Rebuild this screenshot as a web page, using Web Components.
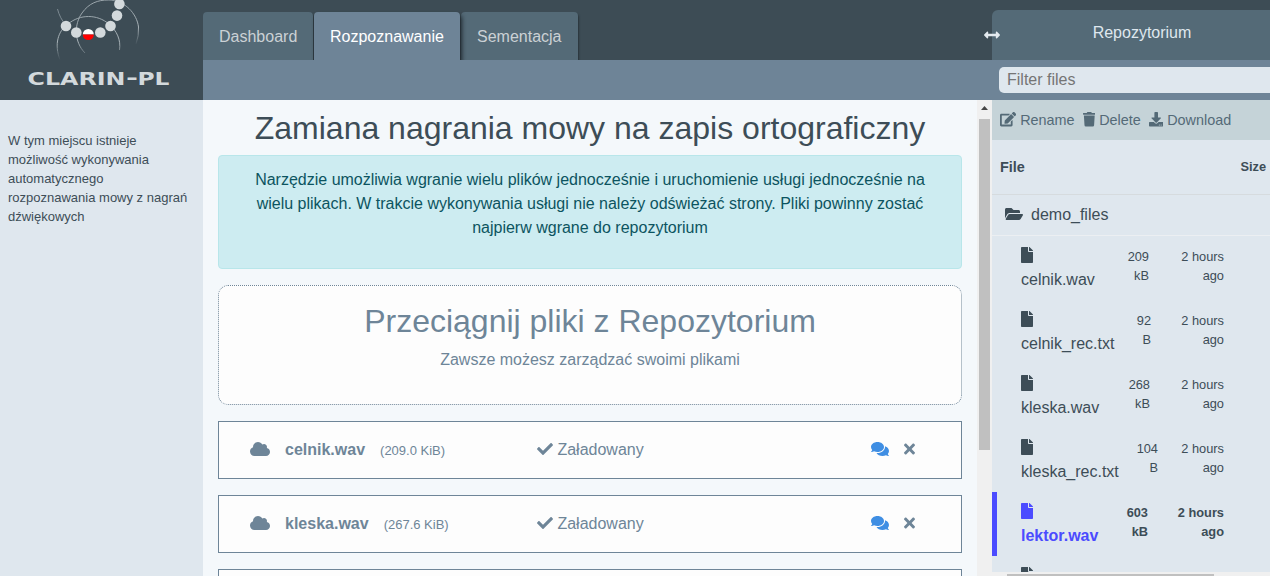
<!DOCTYPE html>
<html lang="pl">
<head>
<meta charset="utf-8">
<title>CLARIN-PL</title>
<style>
html, body { margin: 0; height: 576px; overflow: hidden; }
body { font: 16px/24px "Liberation Sans", Arial, sans-serif; color: #3d4d57; }
</style>
</head>
<body>
<clarin-app></clarin-app>
<script>
const ICONS = {
  arrows: [512, 'M377.941 169.941V216H134.059v-46.059c0-21.382-25.851-32.09-40.971-16.971L7.029 239.029c-9.373 9.373-9.373 24.568 0 33.941l86.059 86.059c15.119 15.119 40.971 4.411 40.971-16.971V296h243.882v46.059c0 21.382 25.851 32.09 40.971 16.971l86.059-86.059c9.373-9.373 9.373-24.568 0-33.941l-86.059-86.059c-15.119-15.12-40.971-4.412-40.971 16.97z'],
  edit: [576, 'M402.6 83.2l90.2 90.2c3.8 3.8 3.8 10 0 13.8L274.4 405.6l-92.8 10.3c-12.4 1.4-22.9-9.1-21.5-21.5l10.3-92.8L388.8 83.2c3.8-3.8 10-3.8 13.8 0zm162-22.9l-48.8-48.8c-15.2-15.2-39.9-15.2-55.2 0l-35.4 35.4c-3.8 3.8-3.8 10 0 13.8l90.2 90.2c3.8 3.8 10 3.8 13.8 0l35.4-35.4c15.2-15.3 15.2-40 0-55.2zM384 346.2V448H64V128h229.8c3.2 0 6.2-1.3 8.5-3.5l40-40c7.6-7.6 2.2-20.5-8.5-20.5H48C21.5 64 0 85.5 0 112v352c0 26.5 21.5 48 48 48h352c26.5 0 48-21.5 48-48V306.2c0-10.7-12.9-16-20.5-8.5l-40 40c-2.2 2.3-3.5 5.3-3.5 8.5z'],
  trash: [448, 'M432 32H312l-9.4-18.7A24 24 0 0 0 281.1 0H166.8a23.72 23.72 0 0 0-21.4 13.3L136 32H16A16 16 0 0 0 0 48v32a16 16 0 0 0 16 16h416a16 16 0 0 0 16-16V48a16 16 0 0 0-16-16zM53.2 467a48 48 0 0 0 47.9 45h245.8a48 48 0 0 0 47.9-45L416 128H32z'],
  download: [512, 'M216 0h80c13.3 0 24 10.7 24 24v168h87.7c17.8 0 26.7 21.5 14.1 34.1L269.7 378.3c-7.5 7.5-19.8 7.5-27.3 0L90.1 226.1c-12.6-12.6-3.7-34.1 14.1-34.1H192V24c0-13.3 10.7-24 24-24zm296 376v112c0 13.3-10.7 24-24 24H24c-13.3 0-24-10.7-24-24V376c0-13.3 10.7-24 24-24h146.7l49 49c20.1 20.1 52.5 20.1 72.6 0l49-49H488c13.3 0 24 10.7 24 24zm-124 88c0-11-9-20-20-20s-20 9-20 20 9 20 20 20 20-9 20-20zm64 0c0-11-9-20-20-20s-20 9-20 20 9 20 20 20 20-9 20-20z'],
  folder: [576, 'M572.694 292.093L500.27 416.248A63.997 63.997 0 0 1 444.989 448H45.025c-18.523 0-30.064-20.093-20.731-36.093l72.424-124.155A64 64 0 0 1 152 256h399.964c18.523 0 30.064 20.093 20.73 36.093zM152 224h328v-48c0-26.51-21.49-48-48-48H272l-64-64H48C21.49 64 0 85.49 0 112v278.046l69.077-118.418C86.214 242.25 117.989 224 152 224z'],
  file: [384, 'M224 136V0H24C10.7 0 0 10.7 0 24v464c0 13.3 10.7 24 24 24h336c13.3 0 24-10.7 24-24V160H248c-13.2 0-24-10.8-24-24zm160-14.1v6.1H256V0h6.1c6.4 0 12.5 2.5 17 7l97.9 98c4.5 4.5 7 10.6 7 16.9z'],
  cloud: [640, 'M537.6 226.6c4.1-10.7 6.4-22.4 6.4-34.6 0-53-43-96-96-96-19.7 0-38.1 6-53.3 16.2C367 64.2 315.3 32 256 32c-88.4 0-160 71.6-160 160 0 2.7.1 5.4.2 8.1C40.2 219.8 0 273.2 0 336c0 79.5 64.5 144 144 144h368c70.7 0 128-57.3 128-128 0-61.9-44-113.6-102.4-125.4z'],
  check: [512, 'M173.898 439.404l-166.4-166.4c-9.997-9.997-9.997-26.206 0-36.204l36.203-36.204c9.997-9.998 26.207-9.998 36.204 0L192 312.69 432.095 72.596c9.997-9.997 26.207-9.997 36.204 0l36.203 36.204c9.997 9.997 9.997 26.206 0 36.204l-294.4 294.401c-9.998 9.997-26.207 9.997-36.204-.001z'],
  comments: [576, 'M416 192c0-88.4-93.1-160-208-160S0 103.6 0 192c0 34.3 14.1 65.9 38 92-13.4 30.2-35.5 54.2-35.8 54.5-2.2 2.3-2.8 5.7-1.5 8.7S4.8 352 8 352c36.6 0 66.9-12.3 88.7-25 32.2 15.7 70.3 25 111.3 25 114.9 0 208-71.6 208-160zm122 220c23.9-26 38-57.7 38-92 0-66.9-53.5-124.2-129.3-148.1.9 6.6 1.3 13.3 1.3 20.1 0 105.9-107.7 192-240 192-10.8 0-21.3-.8-31.7-1.9C207.8 439.6 281.8 480 368 480c41 0 79.1-9.2 111.3-25 21.8 12.7 52.1 25 88.7 25 3.2 0 6.1-1.9 7.3-4.8 1.3-2.9.7-6.3-1.5-8.7-.3-.2-22.4-24.2-35.8-54.5z'],
  times: [352, 'M242.72 256l100.07-100.07c12.28-12.28 12.28-32.19 0-44.48l-22.24-22.24c-12.28-12.28-32.19-12.28-44.48 0L176 189.28 75.93 89.21c-12.28-12.28-32.19-12.28-44.48 0L9.21 111.45c-12.28 12.28-12.28 32.19 0 44.48L109.28 256 9.21 356.07c-12.28 12.28-12.28 32.19 0 44.48l22.24 22.24c12.28 12.28 32.2 12.28 44.48 0L176 322.72l100.07 100.07c12.28 12.28 32.2 12.28 44.48 0l22.24-22.24c12.28-12.28 12.28-32.19 0-44.48L242.72 256z']
};

const define = (name, render) => customElements.define(name, class extends HTMLElement {
  connectedCallback() {
    if (!this.shadowRoot) this.attachShadow({ mode: 'open' }).innerHTML = render(this);
  }
});

define('fa-icon', el => {
  const [w, d] = ICONS[el.getAttribute('name')];
  return `<style>:host{display:inline-block;height:1em;line-height:1;vertical-align:-.125em;flex:none}svg{display:block;height:1em;width:${w / 512}em;fill:currentColor}</style>
  <svg viewBox="0 0 ${w} 512"><path d="${d}"/></svg>`;
});

define('clarin-logo', () => `<style>:host{display:block;width:203px;height:100px;background:#3d4c55}svg{display:block}text{font:bold 17.5px "DejaVu Sans",sans-serif;fill:#d3d9dc}</style>
<svg width="203" height="100" viewBox="0 0 203 100">
  <defs>
    <linearGradient id="f" x1="0" y1="0" x2="0" y2="60" gradientUnits="userSpaceOnUse"><stop offset=".35" stop-color="#9aa5ab"/><stop offset=".7" stop-color="#a9b3b8"/><stop offset="1" stop-color="#3d4c55"/></linearGradient>
    <linearGradient id="r" x1="0" y1="0" x2="0" y2="45" gradientUnits="userSpaceOnUse"><stop offset="0" stop-color="#8b979e"/><stop offset=".6" stop-color="#a9b3b8"/><stop offset="1" stop-color="#3d4c55"/></linearGradient>
  </defs>
  <g fill="none" stroke="url(#f)" stroke-width="1">
    <path d="M60 60C54 44 58 31 68 24C80 14 97 14 109 24C117 31 121 40 119.500 50"/>
    <path d="M85 53C74 42 74 24 82 13C89 3 98 0 108 0"/>
    <path d="M57.500 9C59 15 62 21 66 25" stroke="#7d8a92"/>
  </g>
  <path d="M108 0C125 0 137 14 138.500 27Q139 36 136 44" fill="none" stroke="url(#r)"/>
  <g fill="#d3d9dc"><circle cx="66" cy="26" r="5.300"/><circle cx="76.300" cy="32.500" r="5.300"/><circle cx="100.300" cy="32.500" r="5.300"/><circle cx="110.500" cy="26" r="5.300"/><circle cx="117" cy="15.600" r="5.300"/><circle cx="119.400" cy="4" r="5.300"/></g>
  <path d="M82.800 34.500a5.500 5.500 0 0 1 11 0z" fill="#fff"/><path d="M82.800 34.500a5.500 5.500 0 0 0 11 0z" fill="#f00"/>
  <text y="85"><tspan x="27.500" textLength="98" lengthAdjust="spacingAndGlyphs">CLARIN</tspan><tspan x="126" y="84" textLength="12" lengthAdjust="spacingAndGlyphs">-</tspan><tspan x="137.500" y="85" textLength="32" lengthAdjust="spacingAndGlyphs">PL</tspan></text>
</svg>`);

define('nav-tab', el => {
  const on = el.hasAttribute('active');
  return `<style>:host{display:block;box-sizing:border-box;height:48px;padding:13px 16px 0;border-radius:4px 4px 0 0;white-space:nowrap;
    background:${on ? '#6e8497' : '#546a77'};color:${on ? '#fff' : '#cbd1d5'};box-shadow:${on ? '2px 3px 4px #20292f' : '1px 2px 2px #28333a'};position:relative;z-index:${on ? 1 : 0}}</style><slot></slot>`;
});

define('app-tabs', () => `<style>:host{display:flex;gap:1px;height:60px;align-items:flex-end;background:#3d4c55;overflow:hidden}
nav-tab{flex:none;width:110px}nav-tab[active]{width:146px}nav-tab:last-of-type{width:117px}</style>
<nav-tab>Dashboard</nav-tab><nav-tab active>Rozpoznawanie</nav-tab><nav-tab>Sementacja</nav-tab>`);

define('app-sidebar', () => `<style>:host{display:block;box-sizing:border-box;background:#dfe7ee;padding:31px 8px;font-size:13px;line-height:19px;color:#3d4d57;white-space:nowrap}</style>
W tym miejscu istnieje<br>możliwość wykonywania<br>automatycznego<br>rozpoznawania mowy z nagrań<br>dźwiękowych`);

define('info-alert', () => `<style>:host{display:block;box-sizing:border-box;height:114px;padding:12px 0;border:1px solid #b8e6ea;border-radius:4px;background:#cdecf1;color:#0c5460;text-align:center;white-space:nowrap}</style><slot></slot>`);

define('drop-zone', () => `<style>:host{display:block;box-sizing:border-box;height:120px;margin-top:16px;padding-top:16px;border:1px dotted #6e8598;border-radius:10px;background:#fdfdfd;color:#6e8598;text-align:center}
h2{margin:0 0 8px;font-size:32px;line-height:38.4px;font-weight:400}</style>
<h2>Przeciągnij pliki z Repozytorium</h2><div>Zawsze możesz zarządzać swoimi plikami</div>`);

define('upload-card', el => `<style>:host{display:grid;grid-template-columns:287px 334px 33px 1fr;align-items:center;box-sizing:border-box;height:58px;margin-top:16px;padding:0 31px;border:1px solid #6e8598;background:#fdfdfd;color:#6e8598;white-space:nowrap}
.f{display:flex;align-items:center}.f fa-icon{margin-top:-1px}
b{margin:0 15px}small{font-size:13px;margin-top:2px}.c{color:#3f8ee3}fa-icon[name=comments],fa-icon[name=times]{margin-top:-1px}</style>
${el.hasAttribute('name') ? `<div class="f"><fa-icon name="cloud"></fa-icon><b>${el.getAttribute('name')}</b><small>(${el.getAttribute('size')})</small></div>
<div><fa-icon name="check"></fa-icon> Załadowany</div>
<fa-icon class="c" name="comments"></fa-icon><fa-icon name="times"></fa-icon>` : ''}`);

define('main-panel', () => `<style>:host{display:block;box-sizing:border-box;padding:8.500px 15px 0;background:#f4f8fb;overflow:hidden}
h1{margin:0 0 8px;font-size:32px;line-height:38.4px;font-weight:400;text-align:center;white-space:nowrap}</style>
<h1>Zamiana nagrania mowy na zapis ortograficzny</h1>
<info-alert>Narzędzie umożliwia wgranie wielu plików jednocześnie i uruchomienie usługi jednocześnie na<br>wielu plikach. W trakcie wykonywania usługi nie należy odświeżać strony. Pliki powinny zostać<br>najpierw wgrane do repozytorium</info-alert>
<drop-zone></drop-zone>
<upload-card name="celnik.wav" size="209.0 KiB"></upload-card>
<upload-card name="kleska.wav" size="267.6 KiB"></upload-card>
<upload-card></upload-card>`);

define('scroll-bar', () => `<style>:host{display:block;background:#f0f0f0;padding:0 2px}
svg{display:block;margin:0 auto}div{height:331px;background:#c0c0c0}</style>
<svg width="11" height="19"><path d="M2 10L5.500 6L9 10z" fill="#454545"/></svg><div></div>`);

define('file-row', el => {
  const on = el.hasAttribute('selected');
  const named = el.hasAttribute('name');
  return `<style>:host{display:flex;box-sizing:border-box;height:64px;padding:7px 46px 0 ${on ? 24 : 29}px;${on ? 'border-left:5px solid #4b4bff;font-weight:700;' : ''}}
  .n{width:${(el.getAttribute('at') || 157) - 51}px;height:48px;white-space:nowrap;color:${on ? '#4b4bff' : 'inherit'}}
  .n fa-icon{display:block;margin:4px 0 5px;height:16px}
  .s{width:22px;display:flex;flex-direction:column;align-items:flex-end}.t{flex:1;text-align:right}.s,.t{font-size:12.8px;line-height:19.2px;padding-top:4px;white-space:nowrap}</style>
  <div class="n"><fa-icon name="file"></fa-icon>${named ? el.getAttribute('name') : ''}</div>
  ${named ? `<div class="s"><span>${el.getAttribute('size')}</span><span>${el.getAttribute('unit')}</span></div>
  <div class="t">2 hours<br>ago</div>` : ''}`;
});

define('repo-header', () => `<style>:host{display:block;width:278px;height:100px}
.tab{box-sizing:border-box;height:50px;margin-top:10px;padding:11px 0 0 22px;background:#546a77;border-radius:6px 0 0 0;text-align:center;color:#dfe7ee;position:relative}
.tab fa-icon{position:absolute;left:-8px;top:17px;color:#e4eaef}
.bar{height:33px;padding:7px 0 0 7px;background:#6e8497}
.in{height:26px;line-height:25px;padding-left:8px;border-radius:5px 0 0 5px;background:#dfe7ee;color:#757575}</style>
<div class="tab">Repozytorium<fa-icon name="arrows"></fa-icon></div><div class="bar"><div class="in">Filter files</div></div>`);

define('repo-panel', () => `<style>:host{display:flex;flex-direction:column;background:#dfe7ee;overflow:hidden}
.tools{flex:none;display:flex;gap:8px;height:40px;line-height:40px;padding-left:8px;background:#c5d3d8;color:#546a77;font-size:14.4px;white-space:nowrap}
.head{flex:none;box-sizing:border-box;display:flex;justify-content:space-between;height:55px;padding:15px 4px 0 8px;border-bottom:1px solid #d6dbde;font-weight:700}.head span{font-size:14.4px}.head small{font-size:12.8px}
.dir{flex:none;box-sizing:border-box;height:41px;padding:8px 0 0 13px;border-bottom:1px solid #eceff2}.dir fa-icon{margin-right:8px}
.list{flex:1;min-height:0;overflow:hidden}
.hs{flex:none;height:2px;padding:2px 56px 0 15px;background:#f0f0f0}.hs i{display:block;height:2px;background:#c0c0c0}</style>
<div class="tools"><span><fa-icon name="edit"></fa-icon> Rename</span><span><fa-icon name="trash"></fa-icon> Delete</span><span><fa-icon name="download"></fa-icon> Download</span></div>
<div class="head"><span>File</span><small>Size</small></div>
<div class="dir"><fa-icon name="folder"></fa-icon>demo_files</div>
<div class="list">
<file-row name="celnik.wav" size="209" unit="kB" at="157"></file-row>
<file-row name="celnik_rec.txt" size="92" unit="B" at="159"></file-row>
<file-row name="kleska.wav" size="268" unit="kB" at="158"></file-row>
<file-row name="kleska_rec.txt" size="104" unit="B" at="166"></file-row>
<file-row name="lektor.wav" size="603" unit="kB" at="156" selected></file-row>
<file-row></file-row>
</div><div class="hs"><i></i></div>`);

define('clarin-app', () => `<style>:host{display:grid;grid-template:100px 476px / 203px 774px 15px 278px;width:1270px;height:576px;overflow:hidden}
.mid{grid-column:2 / 4;background:#6e8497}.right{background:#3d4c55;display:flow-root}</style>
<clarin-logo></clarin-logo><div class="mid"><app-tabs></app-tabs></div><div class="right"><repo-header></repo-header></div>
<app-sidebar></app-sidebar><main-panel></main-panel><scroll-bar></scroll-bar><repo-panel></repo-panel>`);
</script>
</body>
</html>
